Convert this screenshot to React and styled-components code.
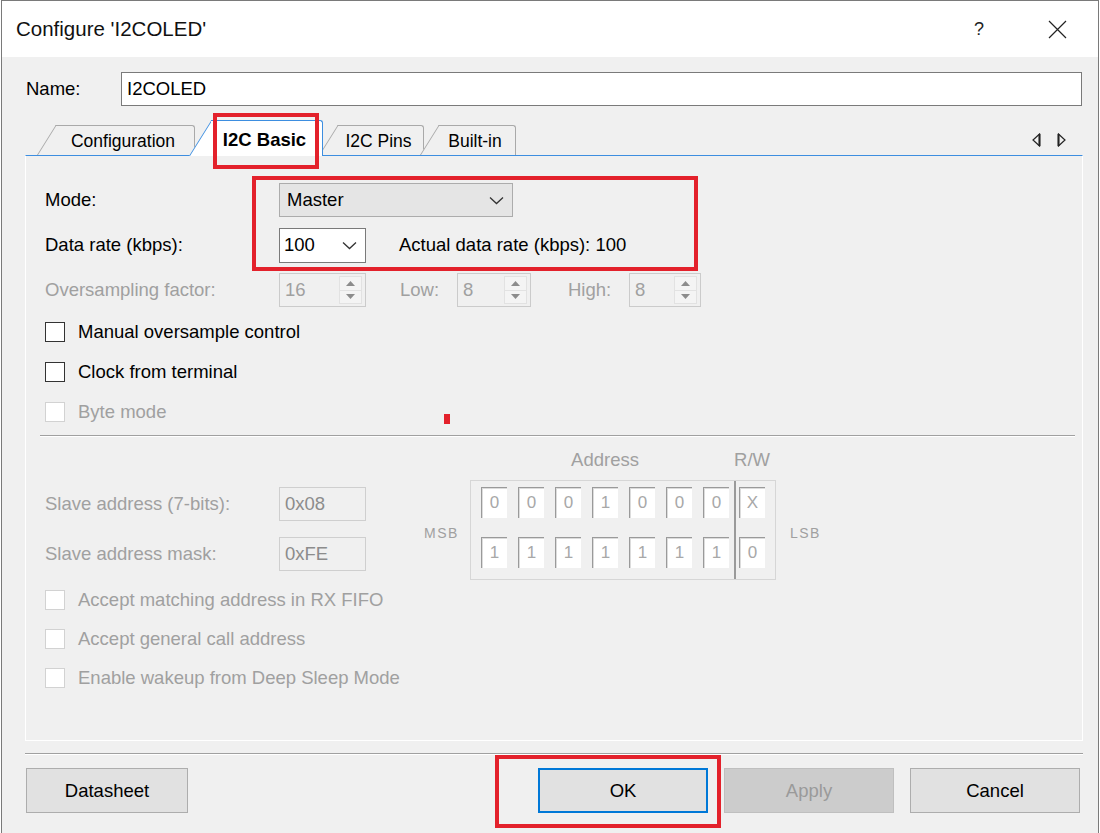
import styled, { createGlobalStyle } from "styled-components"

const BLUE = "#3d8ee0"
const RED = "#e3212b"
const DIM = "#a0a0a0"

const GlobalStyle = createGlobalStyle`
  html, body {
    margin: 0;
    padding: 0;
    background: #fff;
  }
  body {
    font-family: "Liberation Sans", Arial, sans-serif;
    font-size: 18.5px;
    color: #000;
  }
  * { box-sizing: border-box; }
`

// window frame
const Window = styled.div`
  position: relative;
  width: 1098px;
  height: 833px;
  margin-left: 1px;
  border: 1px solid #7a7a7a;
  border-bottom: none;
  background: #f0f0f0;
  display: flex;
  flex-direction: column;
  overflow: hidden;
`

const TitleBar = styled.div`
  height: 56px;
  flex-shrink: 0;
  background: #fff;
  display: flex;
  align-items: center;
  padding-left: 14px;
`

const Title = styled.div`
  flex: 1;
  font-size: 20.5px;
  color: #111;
`

const TitleButtons = styled.div`
  display: flex;
  gap: 32px;
  margin-right: 18px;
`

const TitleButton = styled.div`
  width: 46px;
  height: 40px;
  display: flex;
  align-items: center;
  justify-content: center;
  font-size: 18px;
  color: #222;
`

const Body = styled.div`
  display: flex;
  flex-direction: column;
  padding: 15px 15px 0 23px;
`

// name row
const NameRow = styled.div`
  display: flex;
  align-items: center;
  height: 34px;
  padding-left: 1px;
`

const NameLabel = styled.div`
  width: 95px;
`

const TextBox = styled.div`
  flex: 1;
  height: 34px;
  margin-right: 1px;
  background: #fff;
  border: 1px solid #7a7a7a;
  display: flex;
  align-items: center;
  padding-left: 5px;
`

// tabs
const TabStrip = styled.div`
  display: flex;
  align-items: flex-end;
  height: 35px;
  margin-top: 14px;
  padding-left: 12px;
`

const Tab = styled.div`
  position: relative;
  z-index: ${p => (p.$active ? 3 : 1)};
  display: flex;
  width: ${p => p.$w}px;
  height: ${p => (p.$active ? 36 : 30)}px;
  margin-left: ${p => p.$ml || 0}px;
  margin-bottom: ${p => (p.$active ? -1 : 0)}px;
  padding-left: ${p => (p.$active ? 22 : 19)}px;

  &::before {
    content: "";
    position: absolute;
    left: 0;
    top: 0;
    bottom: 0;
    width: 40px;
    background: ${p => (p.$active ? "#fff" : "#f0f0f0")};
    border-left: 1px solid ${p => (p.$active ? BLUE : "#a9a9a9")};
    border-top: 1px solid ${p => (p.$active ? BLUE : "#a9a9a9")};
    transform-origin: bottom left;
    transform: skewX(-32deg);
  }
`

const TabFace = styled.div`
  position: relative;
  z-index: 1;
  flex: 1;
  display: flex;
  align-items: center;
  justify-content: center;
  padding-top: ${p => (p.$active ? 3 : 1)}px;
  padding-right: 4px;
  background: ${p => (p.$active ? "#fff" : "#f0f0f0")};
  border-top: 1px solid ${p => (p.$active ? BLUE : "#a9a9a9")};
  border-right: 1px solid ${p => (p.$active ? BLUE : "#a9a9a9")};
  border-top-right-radius: 3px;
  font-size: ${p => (p.$active ? 18.5 : 17.5)}px;
  font-weight: ${p => (p.$active ? 700 : 400)};
  white-space: nowrap;
`

const ScrollArrows = styled.div`
  display: flex;
  gap: 16px;
  margin-left: auto;
  margin-right: 17px;
  align-self: center;
  padding-top: 4px;
`

// tab page
const Panel = styled.div`
  height: 586px;
  background: #f0f0f0;
  border: 1px solid #fff;
  border-top: 1px solid ${BLUE};
  padding: 27px 0 0 19px;
  display: flex;
  flex-direction: column;
`

const FieldRow = styled.div`
  display: flex;
  align-items: center;
  height: 34px;
  margin-bottom: 11px;
`

const Label = styled.div`
  width: ${p => p.$w || 234}px;
  margin-left: ${p => p.$ml || 0}px;
  color: ${p => (p.$dim ? DIM : "#000")};
  white-space: nowrap;
`

const Select = styled.div`
  width: ${p => p.$w}px;
  height: ${p => p.$h || 34}px;
  display: flex;
  align-items: center;
  justify-content: space-between;
  padding: 0 8px 0 ${p => p.$pad}px;
  background: ${p => (p.$flat ? "#e5e5e5" : "#fff")};
  border: 1px solid ${p => (p.$flat ? "#acacac" : "#7a7a7a")};
`

const Note = styled.div`
  margin-left: 33px;
`

const Spinner = styled.div`
  width: ${p => p.$w}px;
  height: 34px;
  display: flex;
  align-items: center;
  padding-left: 5px;
  border: 1px solid #cbcbcb;
  background: #f0f0f0;
  color: ${DIM};
`

const SpinButtons = styled.div`
  margin-left: auto;
  margin-right: 3px;
  width: 23px;
  height: 28px;
  display: flex;
  flex-direction: column;
  border: 1px solid #e2e2e2;
  background: #f4f4f4;
`

const SpinHalf = styled.div`
  flex: 1;
  display: flex;
  align-items: center;
  justify-content: center;
  & + & { border-top: 1px solid #e2e2e2; }
`

const CheckGroup = styled.div`
  margin-top: ${p => p.$mt || 0}px;
`

const CheckRow = styled.div`
  display: flex;
  align-items: center;
  height: ${p => p.$h}px;
  color: ${p => (p.$dim ? DIM : "#000")};
`

const CheckBox = styled.div`
  width: 20px;
  height: 20px;
  margin-right: 13px;
  background: #fff;
  border: 1px solid ${p => (p.$dim ? "#d2d2d2" : "#333")};
`

const Separator = styled.div`
  height: 2px;
  margin: ${p => p.$margin};
  border-top: 1px solid #a0a0a0;
  border-bottom: 1px solid #fff;
`

// slave address block
const AddressSection = styled.div`
  display: flex;
  align-items: flex-start;
  margin-top: 7px;
`

const SlaveCol = styled.div`
  display: flex;
  flex-direction: column;
  gap: 16px;
  padding-top: 43px;
`

const SlaveRow = styled.div`
  display: flex;
  align-items: center;
`

const ValueBox = styled.div`
  width: 87px;
  height: 34px;
  display: flex;
  align-items: center;
  padding-left: 5px;
  border: 1px solid #cfcfcf;
  background: #f0f0f0;
  color: #8c8c8c;
`

const SideTag = styled.div`
  width: ${p => p.$w}px;
  margin-left: ${p => p.$ml}px;
  height: 100px;
  margin-top: 36px;
  padding-top: 6px;
  display: flex;
  align-items: center;
  font-size: 14px;
  letter-spacing: 1.5px;
  color: ${DIM};
`

const BitBlock = styled.div`
  display: flex;
  flex-direction: column;
`

const BitHead = styled.div`
  display: flex;
  align-items: center;
  height: 36px;
  padding: 0 11px 4px;
  color: ${DIM};
`

const HeadCell = styled.div`
  width: ${p => p.$w}px;
  margin-left: ${p => p.$ml || 0}px;
  display: flex;
  justify-content: center;
  white-space: nowrap;
`

const BitBox = styled.div`
  display: flex;
  padding: 0 10px;
  border: 1px solid #d6d6d6;
`

const BitGrid = styled.div`
  display: grid;
  grid-template-columns: repeat(${p => p.$cols}, 26px);
  column-gap: 11px;
  row-gap: 19px;
  padding: 6px 0 11px;
`

const BitDivider = styled.div`
  width: 2px;
  margin: 0 3px 0 5px;
  background: #9a9a9a;
`

const BitCell = styled.div`
  width: 26px;
  height: 31px;
  display: flex;
  align-items: center;
  justify-content: center;
  background: #fff;
  border-top: 1px solid #9a9a9a;
  border-left: 1px solid #9a9a9a;
  box-shadow: inset 1px 1px 0 #dcdcdc;
  color: #a8a8a8;
  font-size: 17px;
`

// footer
const ButtonRow = styled.div`
  display: flex;
  margin-top: 13px;
  padding-left: 1px;
`

const ButtonGroup = styled.div`
  display: flex;
  gap: 16px;
  margin-left: auto;
  margin-right: 3px;
`

const Button = styled.div`
  width: ${p => p.$w}px;
  height: 45px;
  display: flex;
  align-items: center;
  justify-content: center;
  background: ${p => (p.$disabled ? "#cccccc" : "#e1e1e1")};
  border: ${p => (p.$primary ? `2px solid #0078d7` : `1px solid ${p.$disabled ? "#bfbfbf" : "#adadad"}`)};
  color: ${p => (p.$disabled ? "#9a9a9a" : "#000")};
`

// annotation overlays drawn on top of the screenshot
const Marker = styled.div`
  position: absolute;
  left: ${p => p.$x}px;
  top: ${p => p.$y}px;
  width: ${p => p.$w}px;
  height: ${p => p.$h}px;
  border: ${p => (p.$fill ? "none" : `4px solid ${RED}`)};
  background: ${p => (p.$fill ? RED : "transparent")};
  pointer-events: none;
  z-index: 10;
`

const Chevron = () => (
  <svg width="15" height="9" viewBox="0 0 15 9">
    <polyline points="1,1.5 7.5,7.5 14,1.5" fill="none" stroke="#333" strokeWidth="1.3" />
  </svg>
)

const Tri = ({ up }) => (
  <svg width="9" height="5" viewBox="0 0 9 5">
    <polygon points={up ? "0,5 9,5 4.5,0" : "0,0 9,0 4.5,5"} fill="#8c8c8c" />
  </svg>
)

const SpinBox = ({ w, value }) => (
  <Spinner $w={w}>
    {value}
    <SpinButtons>
      <SpinHalf><Tri up /></SpinHalf>
      <SpinHalf><Tri /></SpinHalf>
    </SpinButtons>
  </Spinner>
)

const Check = ({ label, dim, h }) => (
  <CheckRow $dim={dim} $h={h}>
    <CheckBox $dim={dim} />
    {label}
  </CheckRow>
)

const addrBits = [["0", "0", "0", "1", "0", "0", "0"], ["1", "1", "1", "1", "1", "1", "1"]]
const rwBits = ["X", "0"]

export default function App() {
  return (
    <>
      <GlobalStyle />
      <Window>
        <TitleBar>
          <Title>Configure 'I2COLED'</Title>
          <TitleButtons>
            <TitleButton>?</TitleButton>
            <TitleButton>
              <svg width="19" height="19" viewBox="0 0 19 19">
                <path d="M1 1 L18 18 M18 1 L1 18" stroke="#222" strokeWidth="1.2" />
              </svg>
            </TitleButton>
          </TitleButtons>
        </TitleBar>

        <Body>
          <NameRow>
            <NameLabel>Name:</NameLabel>
            <TextBox>I2COLED</TextBox>
          </NameRow>

          <TabStrip>
            <Tab $w={158}><TabFace>Configuration</TabFace></Tab>
            <Tab $w={134} $ml={-6} $active><TabFace $active>I2C Basic</TabFace></Tab>
            <Tab $w={105} $ml={-4}><TabFace>I2C Pins</TabFace></Tab>
            <Tab $w={96} $ml={-4}><TabFace>Built-in</TabFace></Tab>
            <ScrollArrows>
              <svg width="9" height="14" viewBox="0 0 9 14">
                <polygon points="7.5,1 7.5,13 1,7" fill="none" stroke="#222" strokeWidth="1.2" />
                <line x1="7.5" y1="1" x2="7.5" y2="13" stroke="#222" strokeWidth="2" />
              </svg>
              <svg width="9" height="14" viewBox="0 0 9 14">
                <polygon points="1.5,1 1.5,13 8,7" fill="none" stroke="#222" strokeWidth="1.2" />
                <line x1="1.5" y1="1" x2="1.5" y2="13" stroke="#222" strokeWidth="2" />
              </svg>
            </ScrollArrows>
          </TabStrip>

          <Panel>
            <FieldRow>
              <Label>Mode:</Label>
              <Select $w={234} $pad={7} $flat>
                Master
                <Chevron />
              </Select>
            </FieldRow>
            <FieldRow>
              <Label>Data rate (kbps):</Label>
              <Select $w={87} $h={35} $pad={4}>
                100
                <Chevron />
              </Select>
              <Note>Actual data rate (kbps): 100</Note>
            </FieldRow>
            <FieldRow>
              <Label $dim>Oversampling factor:</Label>
              <SpinBox w={87} value="16" />
              <Label $dim $w={57} $ml={34}>Low:</Label>
              <SpinBox w={74} value="8" />
              <Label $dim $w={61} $ml={37}>High:</Label>
              <SpinBox w={72} value="8" />
            </FieldRow>

            <CheckGroup $mt={-6}>
              <Check h={40} label="Manual oversample control" />
              <Check h={40} label="Clock from terminal" />
              <Check h={40} label="Byte mode" dim />
            </CheckGroup>

            <Separator $margin="3px 7px 0 -5px" />

            <AddressSection>
              <SlaveCol>
                <SlaveRow>
                  <Label $dim>Slave address (7-bits):</Label>
                  <ValueBox>0x08</ValueBox>
                </SlaveRow>
                <SlaveRow>
                  <Label $dim>Slave address mask:</Label>
                  <ValueBox>0xFE</ValueBox>
                </SlaveRow>
              </SlaveCol>

              <SideTag $w={46} $ml={58}>MSB</SideTag>

              <BitBlock>
                <BitHead>
                  <HeadCell $w={248}>Address</HeadCell>
                  <HeadCell $w={26} $ml={10}>R/W</HeadCell>
                </BitHead>
                <BitBox>
                  <BitGrid $cols={7}>
                    {addrBits.flat().map((b, i) => <BitCell key={i}>{b}</BitCell>)}
                  </BitGrid>
                  <BitDivider />
                  <BitGrid $cols={1}>
                    {rwBits.map((b, i) => <BitCell key={i}>{b}</BitCell>)}
                  </BitGrid>
                </BitBox>
              </BitBlock>

              <SideTag $w={40} $ml={14}>LSB</SideTag>
            </AddressSection>

            <CheckGroup>
              <Check h={39} label="Accept matching address in RX FIFO" dim />
              <Check h={39} label="Accept general call address" dim />
              <Check h={39} label="Enable wakeup from Deep Sleep Mode" dim />
            </CheckGroup>
          </Panel>

          <Separator $margin="12px 0 0 0" />

          <ButtonRow>
            <Button $w={162}>Datasheet</Button>
            <ButtonGroup>
              <Button $w={170} $primary>OK</Button>
              <Button $w={170} $disabled>Apply</Button>
              <Button $w={170}>Cancel</Button>
            </ButtonGroup>
          </ButtonRow>
        </Body>

        <Marker $x={211} $y={112} $w={106} $h={56} />
        <Marker $x={250} $y={175} $w={446} $h={95} />
        <Marker $x={493} $y={754} $w={226} $h={73} />
        <Marker $x={442} $y={413} $w={6} $h={10} $fill />
      </Window>
    </>
  )
}
